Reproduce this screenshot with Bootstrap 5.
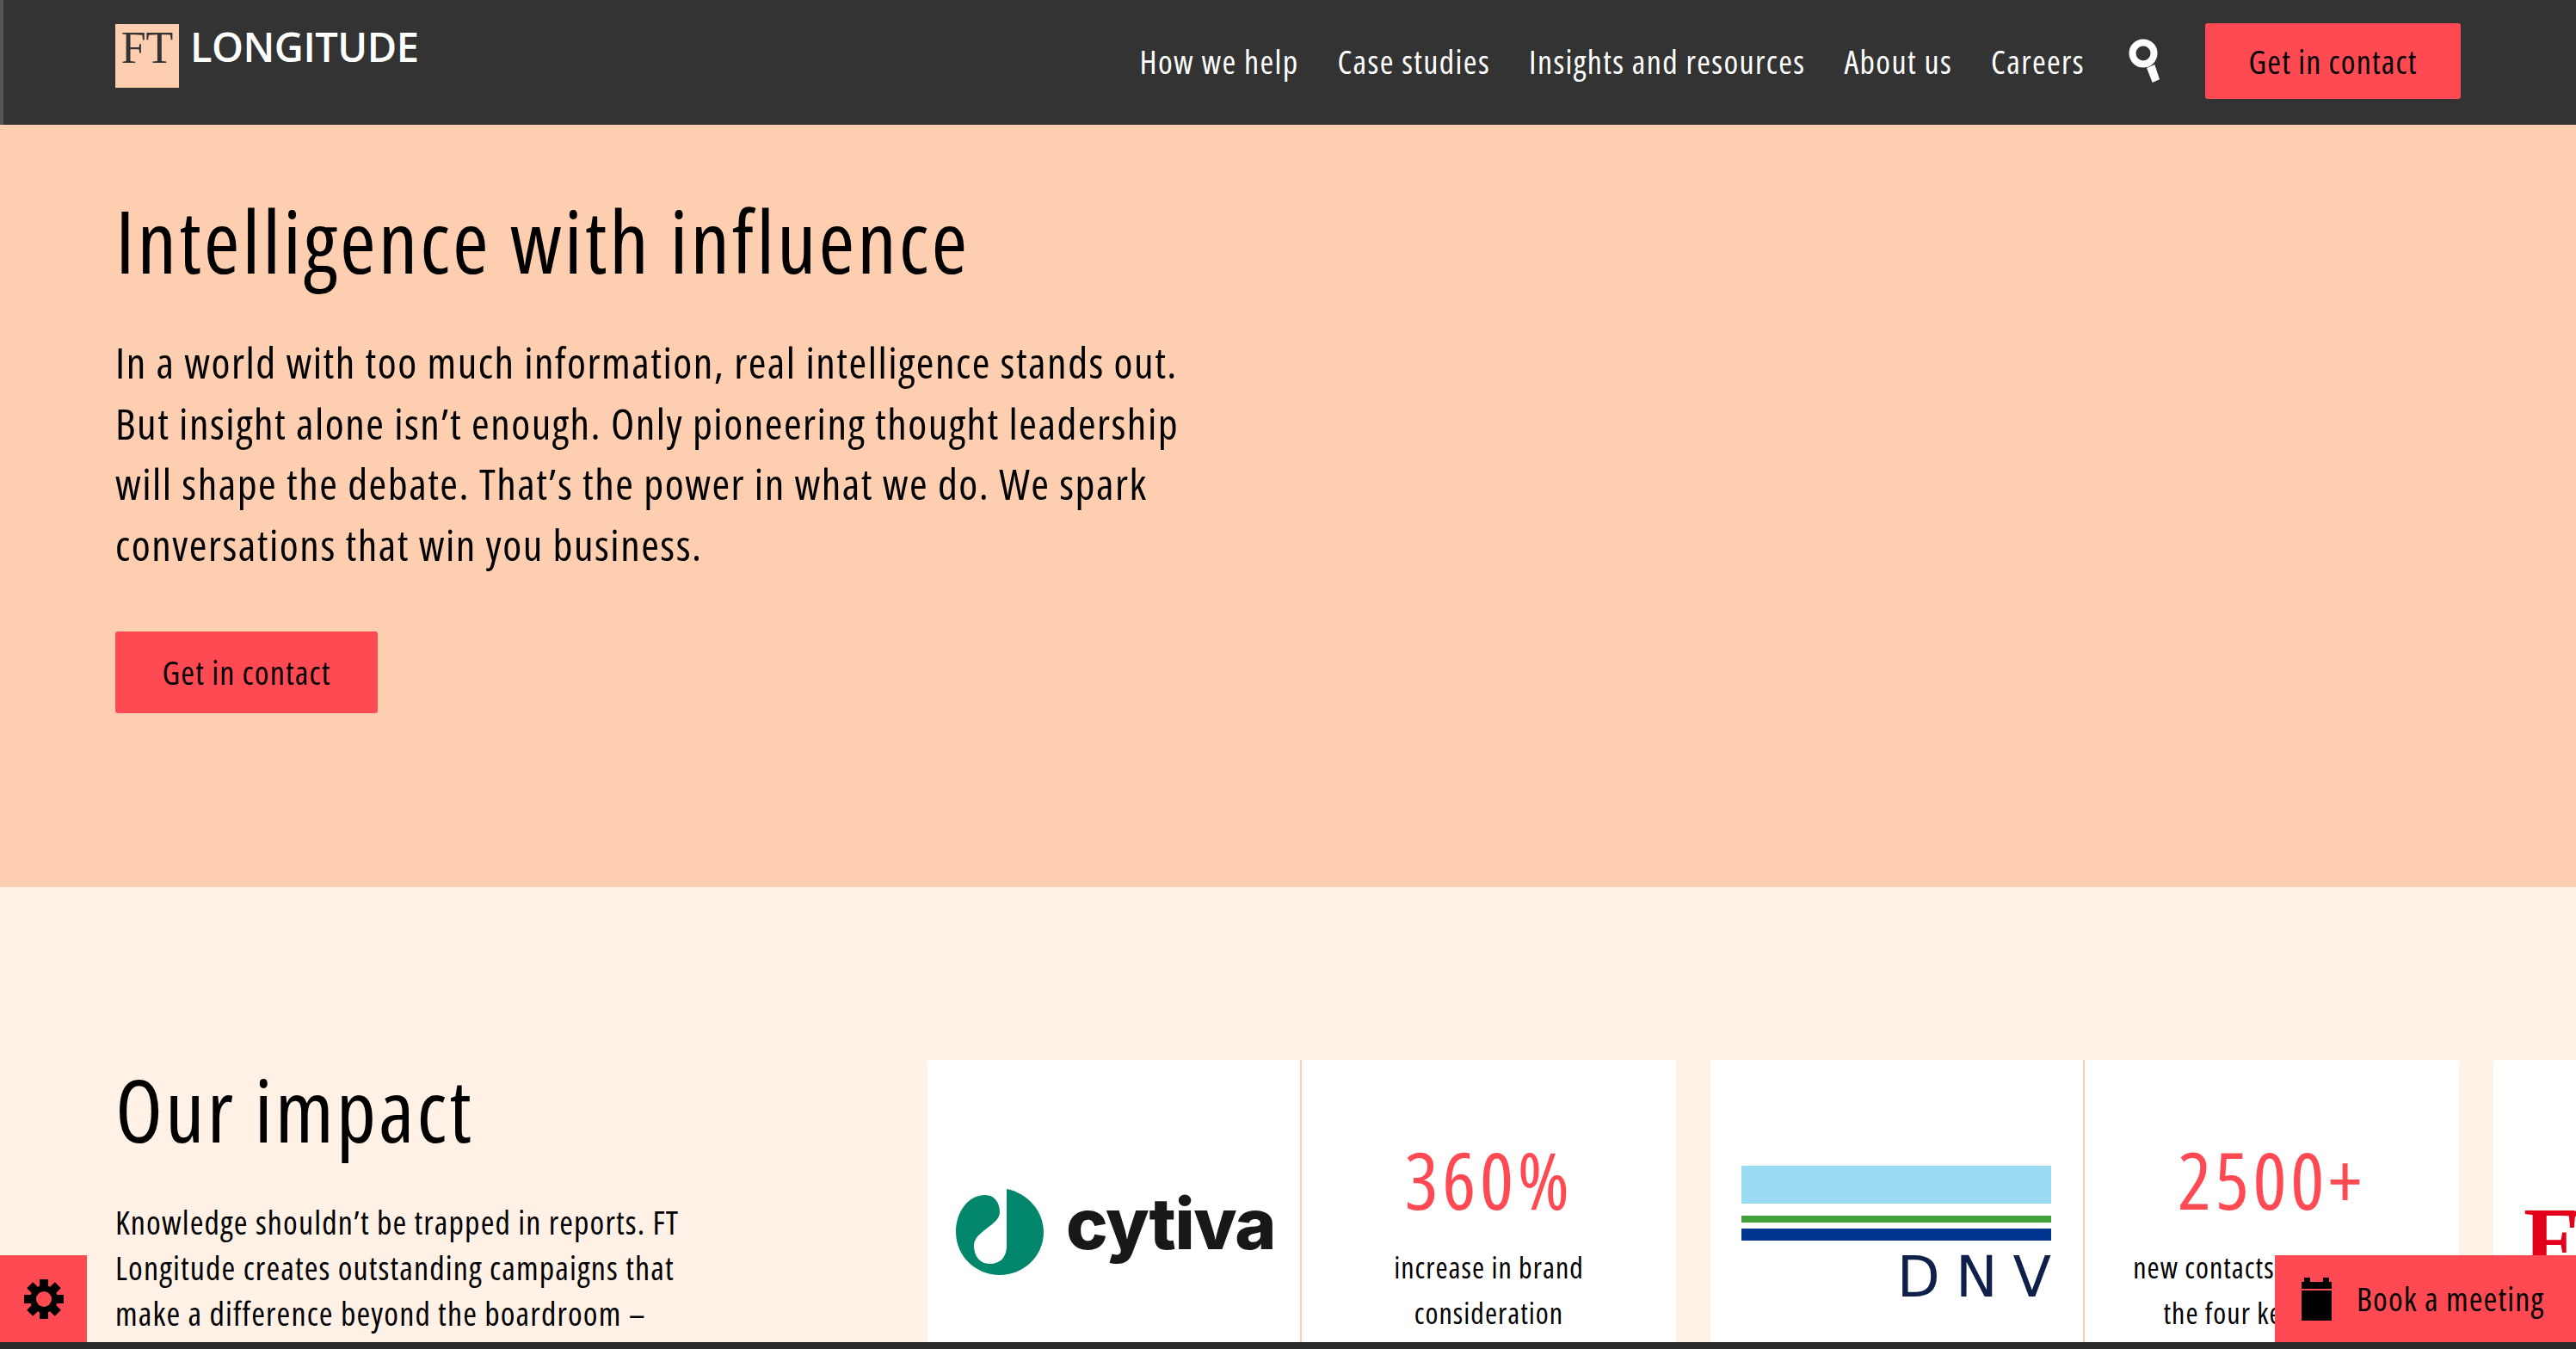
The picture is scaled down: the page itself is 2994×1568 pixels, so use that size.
<!DOCTYPE html>
<html lang="en">
<head>
    <meta charset="UTF-8">
    <title>FT Longitude</title>
    <link href="https://cdn.jsdelivr.net/npm/bootstrap@5.3.0/dist/css/bootstrap.min.css" rel="stylesheet">
    <style>
        html, body { height: 100%; }
        body {
            overflow: hidden;
            background-color: #fff1e5;
            color: #000;
            font-family: "Open Sans", sans-serif;
            font-stretch: 75%;
            font-size: 38px;
        }
        /* only the condensed cut of Open Sans is there, opened up a bit to get the widths */
        body * { letter-spacing: .03em; }
        .ft-top { height: 145px; background-color: #333; padding: 0 134px 0 130px; border-left: 4px solid #555; }
        .ft-logo { width: 74px; height: 74px; margin-top: 28px; background-color: #fdcfb0; color: #333; font-family: "Liberation Serif", serif; font-stretch: 100%; font-size: 52px; line-height: 56px; letter-spacing: 0; text-align: center; }
        .ft-word { margin: 26px 0 0 13px; color: #fff; font-stretch: 100%; font-weight: 600; font-size: 47px; line-height: 56px; letter-spacing: -.5px; }
        .ft-menu { gap: 45px; padding-bottom: 3px; }
        .ft-link { color: #fff; text-decoration: none; line-height: 1; letter-spacing: .036em; }
        .ft-search { margin-left: 6px; }
        .ft-btn { background-color: #ff4a53; color: #000; border: 0; border-radius: 3px; font-stretch: 75%; font-size: 38px; line-height: 1; }
        .ft-btn-top { width: 297px; height: 88px; margin-left: 53px; margin-top: 27px; }
        .ft-btn-hero { width: 305px; height: 95px; }
        .ft-hero { height: 886px; background-color: #fdcfb0; padding: 74px 134px 0; }
        .ft-title { font-size: 101px; line-height: 1.2; font-weight: 400; margin: 0; }
        .ft-intro { width: 1290px; font-size: 50px; line-height: 70.6px; margin: 46px 0 65px; }
        .ft-impact { height: 529px; padding-left: 134px; }
        .ft-side { width: 944px; flex: none; padding-top: 198px; }
        .ft-side p { width: 680px; line-height: 53px; margin-top: 44px; }
        .ft-track { gap: 40px; padding-top: 201px; }
        .ft-tile { width: 870px; height: 600px; flex: none; background-color: #fff; border-radius: 3px; }
        .ft-half { width: 433px; flex: none; }
        .ft-half + .ft-half { width: 437px; border-left: 2px solid #fdcfb0; }
        .ft-cytiva-cell { padding: 150px 0 0 33px; gap: 26px; }
        .ft-cytiva { font-family: "Inter", sans-serif; font-stretch: 100%; font-weight: 800; font-size: 82px; color: #18181a; letter-spacing: -1.500px; line-height: 1; }
        .ft-num { color: #ff4a53; font-size: 92px; line-height: 1; letter-spacing: .05em; text-align: center; margin-top: 93px; }
        .ft-label { text-align: center; font-size: 34px; line-height: 53px; margin-top: 30px; white-space: nowrap; }
        .ft-dnv-cell { padding: 123px 37px 0 36px; }
        .ft-band-a { height: 44px; background-color: #9cdbf4; }
        .ft-band-b { height: 8px; background-color: #43a13a; margin-top: 14px; }
        .ft-band-c { height: 14px; background-color: #003591; margin-top: 7px; }
        .ft-dnv { color: #0f204b; font-family: "DejaVu Sans", sans-serif; font-stretch: 100%; font-size: 65px; letter-spacing: 18px; line-height: 1; text-align: right; margin: 10px -18px 0 0; }
        .ft-red { color: #e3001b; font-family: "Liberation Serif", serif; font-stretch: 100%; font-weight: 700; font-size: 105px; letter-spacing: -12px; line-height: 1; margin: 157px 0 0 35px; }
        .ft-float { position: absolute; bottom: 8px; height: 101px; background-color: #ff4a53; }
        .ft-float-gear { left: 0; width: 101px; }
        .ft-float-book { right: 0; width: 350px; padding-left: 31px; gap: 29px; white-space: nowrap; }
        .ft-base { position: absolute; left: 0; right: 0; bottom: 0; height: 8px; background-color: #2b2b2b; }
    </style>
</head>
<body class="position-relative">
    <nav class="ft-top d-flex">
        <div class="ft-logo">FT</div>
        <div class="ft-word">LONGITUDE</div>
        <div class="ft-menu ms-auto d-flex align-items-center">
            <a class="ft-link" href="#">How we help</a>
            <a class="ft-link" href="#">Case studies</a>
            <a class="ft-link" href="#">Insights and resources</a>
            <a class="ft-link" href="#">About us</a>
            <a class="ft-link" href="#">Careers</a>
            <svg class="ft-search" width="36" height="52" viewBox="0 0 36 52"><circle cx="17" cy="17" r="12.5" fill="none" stroke="#fff" stroke-width="8"/><path d="M21 34l6.700 17 8.300-3.700-5.700-17.300z" fill="#fff"/></svg>
        </div>
        <button class="ft-btn ft-btn-top">Get in contact</button>
    </nav>

    <section class="ft-hero">
        <h1 class="ft-title">Intelligence with influence</h1>
        <p class="ft-intro">In a world with too much information, real intelligence stands out. But insight alone isn’t enough. Only pioneering thought leadership will shape the debate. That’s the power in what we do. We spark conversations that win you business.</p>
        <button class="ft-btn ft-btn-hero">Get in contact</button>
    </section>

    <section class="ft-impact d-flex">
        <div class="ft-side">
            <h2 class="ft-title">Our impact</h2>
            <p>Knowledge shouldn’t be trapped in reports. FT Longitude creates outstanding campaigns that make a difference beyond the boardroom –</p>
        </div>
        <div class="ft-track d-flex">
            <div class="ft-tile d-flex">
                <div class="ft-half ft-cytiva-cell d-flex align-items-start">
                    <svg width="102" height="100" viewBox="0 0 102 100"><path d="M59 0C84 5 102 26 102 50C102 78 79 100 51 100C23 100 0 78 0 50C0 27 14 7 34 7C45 7 51 16 51 27C51 42 21 49 21 66C21 78 28 87 39 87C52 87 59 79 59 66Z" fill="#03876c"/></svg>
                    <span class="ft-cytiva">cytiva</span>
                </div>
                <div class="ft-half">
                    <div class="ft-num">360%</div>
                    <div class="ft-label">increase in brand<br>consideration</div>
                </div>
            </div>
            <div class="ft-tile d-flex">
                <div class="ft-half ft-dnv-cell">
                    <div class="ft-band-a"></div>
                    <div class="ft-band-b"></div>
                    <div class="ft-band-c"></div>
                    <div class="ft-dnv">DNV</div>
                </div>
                <div class="ft-half">
                    <div class="ft-num">2500+</div>
                    <div class="ft-label">new contacts across all of<br>the four key regions</div>
                </div>
            </div>
            <div class="ft-tile"><div class="ft-red">FT</div></div>
        </div>
    </section>

    <div class="ft-float ft-float-gear d-flex align-items-center justify-content-center">
        <svg width="46" height="46" viewBox="-23 -23 46 46"><g fill="#000"><circle r="16"/><rect x="-5" y="-23" width="10" height="46"/><rect x="-5" y="-23" width="10" height="46" transform="rotate(45)"/><rect x="-5" y="-23" width="10" height="46" transform="rotate(90)"/><rect x="-5" y="-23" width="10" height="46" transform="rotate(135)"/></g><circle r="9" fill="#ff4a53"/></svg>
    </div>
    <div class="ft-float ft-float-book d-flex align-items-center">
        <svg width="35" height="50" viewBox="0 0 35 50"><path d="M3 0h7v5h15V0h7v5h3v8H0V5h3zM0 15h35v35H0z" fill="#000"/></svg>
        <span>Book a meeting</span>
    </div>
    <div class="ft-base"></div>
    <script src="https://cdn.jsdelivr.net/npm/bootstrap@5.3.0/dist/js/bootstrap.bundle.min.js"></script>
</body>
</html>
